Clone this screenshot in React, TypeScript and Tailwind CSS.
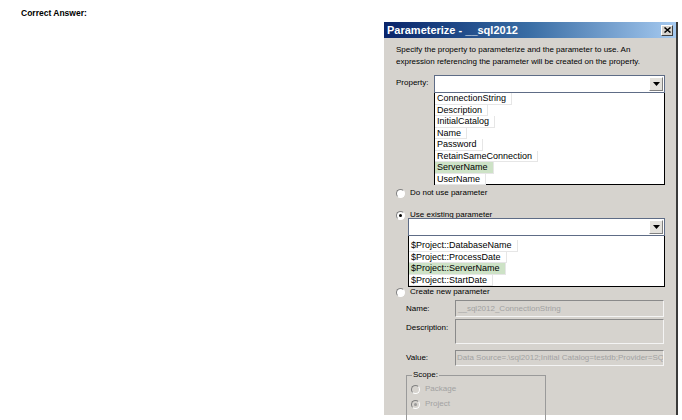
import React from "react";

const font = "font-['Liberation_Sans',Arial,sans-serif]";

function Radio({ checked, disabled }: { checked?: boolean; disabled?: boolean }) {
  return (
    <div
      className={`w-[9px] h-[9px] rounded-full border border-t-[#808080] border-l-[#808080] border-b-white border-r-white flex items-center justify-center ${
        disabled ? "bg-[#d6d3ce]" : "bg-white"
      }`}
    >
      {checked && <div className={`w-[3px] h-[3px] rounded-full ${disabled ? "bg-[#9a9a9a]" : "bg-black"}`} />}
    </div>
  );
}

function Combo() {
  return (
    <div className="h-[18px] bg-white border border-[#5e6c86] flex justify-end items-stretch p-[1px]">
      <div className="w-[14px] bg-[#e4e2dd] border border-t-white border-l-white border-b-[#808080] border-r-[#808080] flex items-center justify-center">
        <svg width="7" height="4" viewBox="0 0 7 4">
          <path d="M0 0h7L3.5 4z" fill="#000" />
        </svg>
      </div>
    </div>
  );
}

function ListItems({ items, selected }: { items: string[]; selected: string }) {
  return (
    <div className="flex flex-col items-start">
      {items.map((t) => (
        <div
          key={t}
          className={`h-[11.5px] leading-[11px] pl-[2px] pr-[5px] text-[9px] border-r border-b border-[#e6e6e6] ${
            t === selected ? "bg-[#cde2c6]" : ""
          }`}
        >
          {t}
        </div>
      ))}
    </div>
  );
}

const sunken =
  "border border-t-[#8a8a8a] border-l-[#8a8a8a] border-b-[#f4f4f4] border-r-[#f4f4f4] bg-[#d6d3ce]";

export default function App() {
  return (
    <div className={`w-[682px] h-[420px] bg-white overflow-hidden text-black ${font}`}>
      <div className="pl-[21px] pt-[7px] h-[22px] text-[8.5px] font-bold">Correct Answer:</div>

      <div className="ml-[384px] w-[294px] h-[393px] bg-[#d6d3ce] border-r-2 border-[#3a3a3a] flex flex-col">
        {/* title bar */}
        <div className="h-[16px] bg-gradient-to-r from-[#0a246a] via-[#3a6ea5] to-[#a6caf0] flex items-center justify-between pl-[3px] pr-[3px]">
          <span className="text-white text-[11px] font-bold">Parameterize - __sql2012</span>
          <div className="w-[12px] h-[11px] bg-[#d6d3ce] border border-t-white border-l-white border-b-[#404040] border-r-[#404040] flex items-center justify-center">
            <svg width="7" height="6" viewBox="0 0 7 6">
              <path d="M0.5 0.5l6 5M6.5 0.5l-6 5" stroke="#000" strokeWidth="1.5" />
            </svg>
          </div>
        </div>

        <div className="pl-[12px] pr-[11px] text-[8px] leading-[12px] mt-[6px]">
          <div>Specify the property to parameterize and the parameter to use. An</div>
          <div>expression referencing the parameter will be created on the property.</div>
        </div>

        {/* property */}
        <div className="flex mt-[7px] pr-[11px]">
          <div className="w-[50px] pl-[12px] text-[8px] pt-[2px]">Property:</div>
          <div className="flex-1">
            <Combo />
            <div className="h-[92px] bg-white border border-t-0 border-black">
              <ListItems
                items={[
                  "ConnectionString",
                  "Description",
                  "InitialCatalog",
                  "Name",
                  "Password",
                  "RetainSameConnection",
                  "ServerName",
                  "UserName",
                ]}
                selected="ServerName"
              />
            </div>
          </div>
        </div>

        <div className="flex items-center gap-[5px] pl-[12px] mt-[3px] h-[10px] text-[8px]">
          <Radio />
          <span>Do not use parameter</span>
        </div>
        <div className="flex items-center gap-[5px] pl-[12px] mt-[12px] h-[10px] text-[8px]">
          <Radio checked />
          <span>Use existing parameter</span>
        </div>

        <div className="ml-[24px] mr-[11px] -mt-[2px]">
          <Combo />
          <div className="h-[51px] pt-[4px] bg-white border border-t-0 border-black">
            <ListItems
              items={[
                "$Project::DatabaseName",
                "$Project::ProcessDate",
                "$Project::ServerName",
                "$Project::StartDate",
              ]}
              selected="$Project::ServerName"
            />
          </div>
        </div>

        <div className="flex items-center gap-[5px] pl-[12px] h-[10px] text-[8px]">
          <Radio />
          <span>Create new parameter</span>
        </div>

        <div className="pl-[22px] pr-[12px] text-[8px]">
          <div className="flex items-center mt-[3px]">
            <div className="w-[49px]">Name:</div>
            <div className={`flex-1 h-[17px] ${sunken} text-[#a2a2a2] pl-[2px] leading-[15px]`}>
              __sql2012_ConnectionString
            </div>
          </div>
          <div className="flex items-start mt-[2px]">
            <div className="w-[49px] pt-[3px]">Description:</div>
            <div className={`flex-1 h-[25px] ${sunken}`} />
          </div>
          <div className="flex items-center mt-[6px]">
            <div className="w-[49px]">Value:</div>
            <div
              className={`flex-1 h-[16px] ${sunken} text-[#a2a2a2] pl-[1px] leading-[14px] whitespace-nowrap overflow-hidden`}
            >
              Data Source=.\sql2012;Initial Catalog=testdb;Provider=SQL
            </div>
          </div>

          <div className="relative mt-[9px] w-[140px] h-[60px] border border-[#9a9a9a]">
            <span className="absolute -top-[6px] left-[5px] bg-[#d6d3ce] px-[1px] leading-[10px]">Scope:</span>
            <div className="flex items-center gap-[5px] pl-[4px] mt-[8px] h-[10px] text-[#a2a2a2]">
              <Radio disabled />
              <span>Package</span>
            </div>
            <div className="flex items-center gap-[5px] pl-[4px] mt-[5px] h-[10px] text-[#a2a2a2]">
              <Radio checked disabled />
              <span>Project</span>
            </div>
          </div>
        </div>
      </div>
    </div>
  );
}
